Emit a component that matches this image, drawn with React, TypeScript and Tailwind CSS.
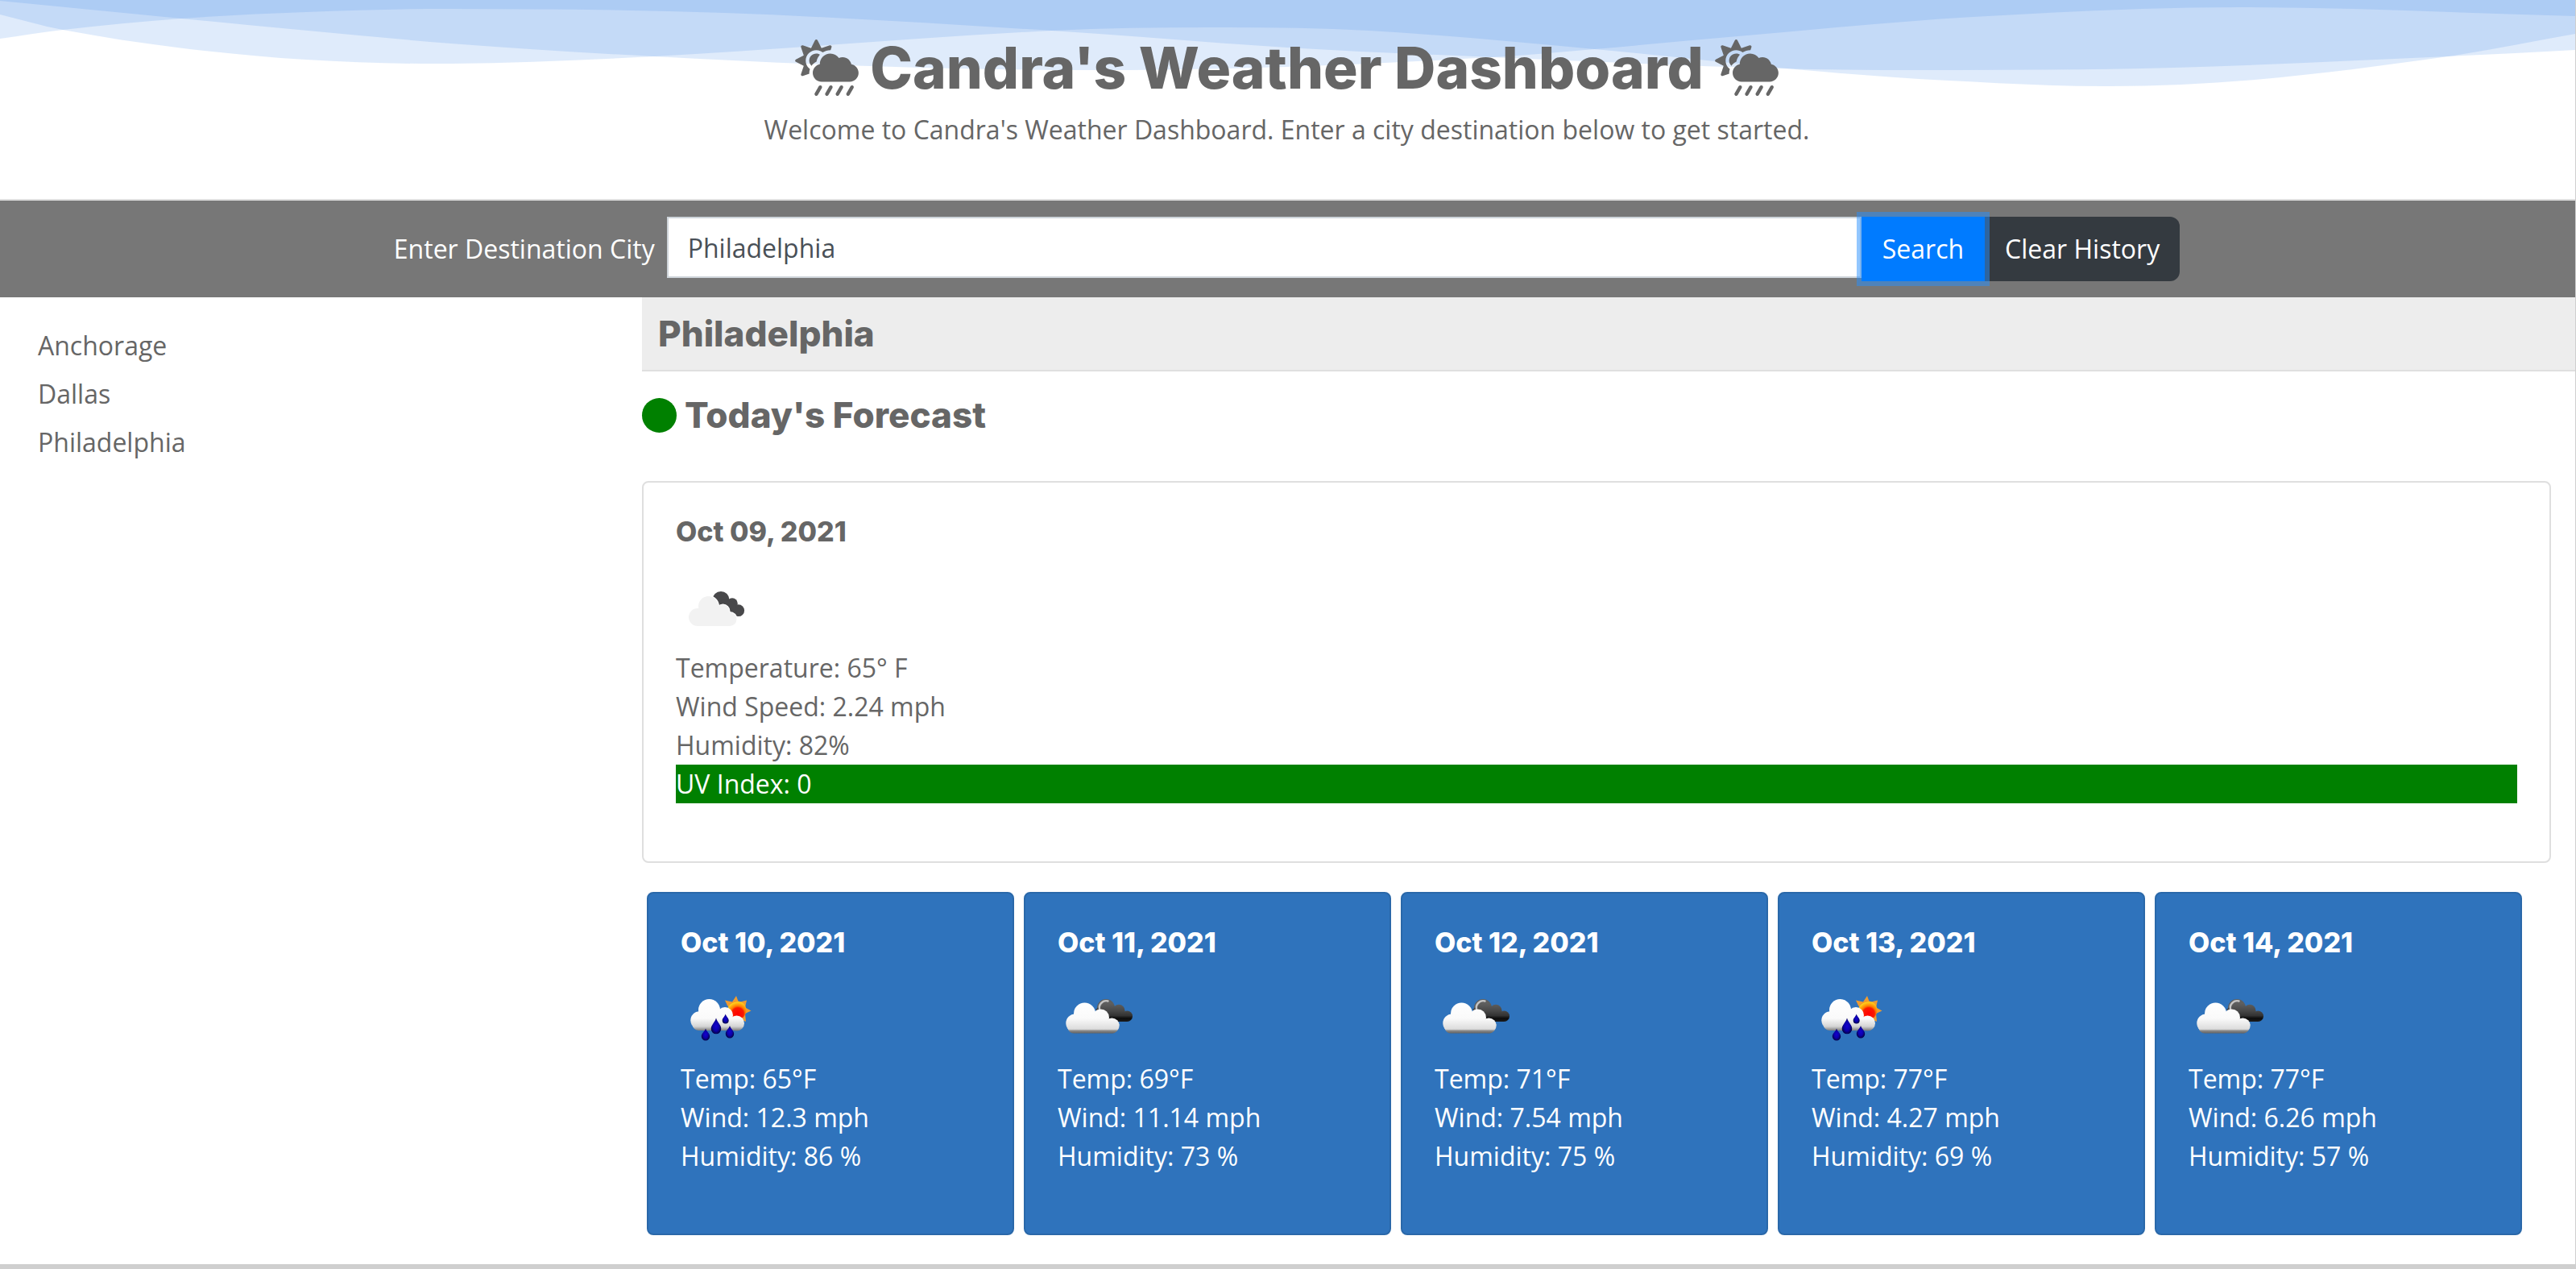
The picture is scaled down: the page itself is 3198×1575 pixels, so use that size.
import { useState } from "react";
import type { ReactNode } from "react";
import { FaCloudSunRain } from "react-icons/fa";

type Point = [number, number];

const WAVES: Point[][] = [
  [[0, 1], [225, 23], [560, 54], [812, 70], [1080, 82], [1350, 87], [1598, 83], [1853, 71], [1980, 61], [2158, 45], [2450, 21], [2780, 9], [3198, 20]],
  [[0, 48], [78, 37], [225, 23], [380, 15], [560, 11], [900, 16], [1306, 38], [1598, 59], [1853, 71], [2210, 85], [2430, 87], [2700, 84], [3040, 70], [3198, 62]],
  [[0, 18], [78, 37], [220, 59], [380, 74], [560, 79], [812, 70], [1306, 38], [1500, 34], [1700, 38], [1980, 61], [2240, 87], [2420, 100], [2620, 107], [2800, 99], [3040, 70], [3198, 42]],
];

/** Smooth path through the points, closed along the top edge. */
function wavePath(points: Point[]): string {
  let d = `M0 0L${points[0][0]} ${points[0][1]}`;
  for (let i = 0; i < points.length - 1; i++) {
    const p0 = points[Math.max(i - 1, 0)];
    const p1 = points[i];
    const p2 = points[i + 1];
    const p3 = points[Math.min(i + 2, points.length - 1)];
    const dx = (p2[0] - p1[0]) / 3;
    const m1 = (p2[1] - p0[1]) / (p2[0] - p0[0]);
    const m2 = (p3[1] - p1[1]) / (p3[0] - p1[0]);
    d += `C${p1[0] + dx} ${p1[1] + m1 * dx} ${p2[0] - dx} ${p2[1] - m2 * dx} ${p2[0]} ${p2[1]}`;
  }
  return d + "V0Z";
}

function Waves() {
  return (
    <svg className="absolute inset-x-0 top-0 h-[110px] w-full" viewBox="0 0 3198 110" preserveAspectRatio="none" aria-hidden="true">
      {WAVES.map((w, i) => (
        <path key={i} d={wavePath(w)} fill="#3785e4" fillOpacity={0.16} />
      ))}
    </svg>
  );
}

function FlatClouds() {
  return (
    <svg className="size-[100px]" viewBox="0 0 100 100" aria-hidden="true">
      <g fill="#48484a">
        <circle cx="56" cy="39.5" r="10.5" />
        <circle cx="70" cy="44" r="6.8" />
        <circle cx="77.7" cy="52.7" r="7.4" />
        <path d="M56 38l14 4 8 10-4 7-14-3z" />
      </g>
      <g fill="#fff" stroke="#fff" strokeWidth="2">
        <circle cx="40.5" cy="47.5" r="12.5" />
        <circle cx="58.5" cy="53.5" r="8" />
        <circle cx="67" cy="63.5" r="8.5" />
      </g>
      <g fill="#f2f2f2">
        <circle cx="27" cy="61" r="11" />
        <circle cx="40.5" cy="47.5" r="12.5" />
        <circle cx="58" cy="54" r="8.5" />
        <circle cx="67" cy="63.5" r="8.5" />
        <path d="M27 72V50h12l15 0 13 8v14z" />
      </g>
    </svg>
  );
}

function GlossyClouds({ id }: { id: string }) {
  return (
    <svg className="size-[100px]" viewBox="0 0 100 100" aria-hidden="true">
      <defs>
        <linearGradient id={`${id}-w`} gradientUnits="userSpaceOnUse" x1="0" y1="30" x2="0" y2="68">
          <stop offset="0" stopColor="#fff" />
          <stop offset="0.5" stopColor="#fafafa" />
          <stop offset="0.85" stopColor="#dcdcdc" />
          <stop offset="0.9" stopColor="#8a8a8a" />
          <stop offset="1" stopColor="#5c5c5c" />
        </linearGradient>
        <linearGradient id={`${id}-d`} gradientUnits="userSpaceOnUse" x1="0" y1="26" x2="0" y2="53">
          <stop offset="0" stopColor="#6a6a6a" />
          <stop offset="0.5" stopColor="#484848" />
          <stop offset="0.72" stopColor="#333" />
          <stop offset="0.85" stopColor="#0c0c0c" />
          <stop offset="1" stopColor="#1c1c1c" />
        </linearGradient>
      </defs>
      <circle cx="60" cy="36" r="11" fill="#5e5e5e" />
      <path d="M47 38l4-3 2 8z" fill="#444" />
      <path d="M52.5 39a8.5 8.5 0 0 1 10-11.5" fill="none" stroke="#c4c4c4" strokeWidth="2.4" strokeLinecap="round" />
      <g fill={`url(#${id}-d)`}>
        <circle cx="62.5" cy="38.5" r="9.5" />
        <circle cx="76" cy="39.2" r="7.5" />
        <circle cx="86.3" cy="46.3" r="6.7" />
        <path d="M58 40h18l10 4v9H62z" />
      </g>
      <g fill={`url(#${id}-w)`}>
        <circle cx="21.8" cy="55" r="11.5" />
        <circle cx="33.5" cy="43" r="13.5" />
        <circle cx="53.5" cy="48" r="10.5" />
        <circle cx="67.3" cy="57.8" r="9.4" />
        <path d="M17 50L33 42l20 4 14 8 7 8c0 4-4 5.600-7 5.600H20c-4 0-7-3-8-8z" />
      </g>
    </svg>
  );
}

function SunRain({ id }: { id: string }) {
  return (
    <svg className="size-[100px]" viewBox="0 0 100 100" aria-hidden="true">
      <defs>
        <linearGradient id={`${id}-c`} gradientUnits="userSpaceOnUse" x1="0" y1="25" x2="0" y2="65">
          <stop offset="0" stopColor="#fff" />
          <stop offset="0.6" stopColor="#fafafa" />
          <stop offset="0.85" stopColor="#d4d4d4" />
          <stop offset="1" stopColor="#6e6e6e" />
        </linearGradient>
        <radialGradient id={`${id}-s`} gradientUnits="userSpaceOnUse" cx="71" cy="43" r="15">
          <stop offset="0" stopColor="#f00" />
          <stop offset="0.48" stopColor="#fb1a00" />
          <stop offset="0.62" stopColor="#ff7a00" />
          <stop offset="0.95" stopColor="#ffd21c" />
          <stop offset="1" stopColor="#f59a20" />
        </radialGradient>
        <radialGradient id={`${id}-r`}>
          <stop offset="0" stopColor="#1400d2" />
          <stop offset="0.6" stopColor="#0b00a8" />
          <stop offset="1" stopColor="#04004e" />
        </radialGradient>
      </defs>
      <path
        d="M69 21l3 8 10-2.500-2 9 7.500 4-7.500 3.500 1 10-9-4-14-16-3-6.500 9 2z"
        fill="#f09c30"
      />
      <circle cx="70" cy="39" r="11.500" fill={`url(#${id}-s)`} />
      <g fill={`url(#${id}-c)`}>
        <circle cx="23.500" cy="51.500" r="11.200" />
        <circle cx="35.500" cy="38.500" r="13.500" />
        <circle cx="55" cy="45" r="10" />
        <circle cx="69.500" cy="55" r="9.500" />
        <path d="M23 40l12-2 20 6 14 9v11H24c-4 0-7-1-9-5z" />
      </g>
      <g fill={`url(#${id}-r)`}>
        <path d="M44 48.500C45.500 54 50.300 57 50.300 62a6.300 6.300 0 0 1-12.600 0C37.700 57 42.500 54 44 48.500z" />
        <path d="M55.700 43.500c1 3.500 4 5 4 8a4 4 0 0 1-8 0c0-3 3-4.500 4-8z" />
        <path d="M31 61.500c1.200 4 5.200 6 5.200 9.700a5.200 5.200 0 0 1-10.400 0c0-3.700 4-5.700 5.200-9.700z" />
        <path d="M61 58c1.200 4 5.200 6 5.200 10.300a5.200 5.200 0 0 1-10.400 0C55.800 64 59.800 62 61 58z" />
      </g>
    </svg>
  );
}

const FORECAST = [
  { date: "Oct 10, 2021", icon: "rain", temp: "65", wind: "12.3", humidity: "86" },
  { date: "Oct 11, 2021", icon: "clouds", temp: "69", wind: "11.14", humidity: "73" },
  { date: "Oct 12, 2021", icon: "clouds", temp: "71", wind: "7.54", humidity: "75" },
  { date: "Oct 13, 2021", icon: "rain", temp: "77", wind: "4.27", humidity: "69" },
  { date: "Oct 14, 2021", icon: "clouds", temp: "77", wind: "6.26", humidity: "57" },
];

function Card({ date, icon, className, children }: { date: string; icon: ReactNode; className: string; children: ReactNode }) {
  return (
    <article className={`rounded-lg border-2 px-10 pt-10 pb-[72px] ${className}`}>
      <h3 className="mb-6 font-[Inter,sans-serif] text-[34px] leading-[42px] font-extrabold">{date}</h3>
      {icon}
      {children}
    </article>
  );
}

export default function App() {
  const [city, setCity] = useState("Philadelphia");

  return (
    <div className="border-r border-b-[6px] border-[#cfcfcf] bg-white font-['Open_Sans',sans-serif] text-[32px] leading-[48px] text-[#666]">
      <header className="relative border-b-2 border-[#dfdfdf] pt-10 pr-0.5 pb-[62px] text-center">
        <Waves />
        <div className="relative">
          <h1 className="mb-[9px] flex items-center justify-center gap-3.5 font-[Inter,sans-serif] text-[71px] leading-[88px] font-extrabold">
            <FaCloudSunRain aria-hidden="true" className="h-[70px] w-[79px]" />
            Candra's Weather Dashboard
            <FaCloudSunRain aria-hidden="true" className="h-[70px] w-[79px]" />
          </h1>
          <p>Welcome to Candra's Weather Dashboard. Enter a city destination below to get started.</p>
        </div>
      </header>

      <div className="bg-[#777] py-5 pr-0.5 text-white">
        <form className="mx-auto flex w-[69.4%] items-start" onSubmit={(e) => e.preventDefault()}>
          <label htmlFor="city" className="mr-[15px] leading-[80px]">
            Enter Destination City
          </label>
          <input
            id="city"
            type="text"
            value={city}
            onChange={(e) => setCity(e.target.value)}
            className="h-[76px] min-w-0 flex-1 border-2 border-[#ced4da] bg-white px-6 text-[#495057] outline-none"
          />
          <button type="submit" className="relative z-10 h-20 bg-[#007bff] px-[26px] ring-[6px] ring-[#268fff]/50">
            Search
          </button>
          <button type="button" className="h-20 rounded-r-xl bg-[#343a40] px-[25px]">
            Clear History
          </button>
        </form>
      </div>

      <div className="flex">
        <nav aria-label="Search history" className="w-[24.93%] pt-[30px]">
          <ul className="pl-[47px]">
            {["Anchorage", "Dallas", "Philadelphia"].map((name) => (
              <li key={name} className="py-1.5">
                <a href={`#${name}`}>{name}</a>
              </li>
            ))}
          </ul>
        </nav>

        <main className="min-w-0 flex-1 pb-9">
          <h2 className="border-b-2 border-[#dfdfdf] bg-[#ededed] px-5 font-[Inter,sans-serif] text-[44px] leading-[90px] font-extrabold">
            Philadelphia
          </h2>
          <h2 className="mt-6 mb-[52px] flex items-center gap-2.5 font-[Inter,sans-serif] text-[44px] leading-[60px] font-extrabold">
            <span className="size-[43px] rounded-full bg-[#008000]" />
            Today's Forecast
          </h2>

          <Card date="Oct 09, 2021" icon={<FlatClouds />} className="mr-[30px] border-[#dfdfdf]">
            <p>Temperature: 65° F</p>
            <p>Wind Speed: 2.24 mph</p>
            <p>Humidity: 82%</p>
            <p className="bg-[#008000] text-white">UV Index: 0</p>
          </Card>

          <section aria-label="Five day forecast" className="mt-9 mr-[66px] ml-1.5 grid grid-cols-5 gap-3">
            {FORECAST.map((day, i) => (
              <Card
                key={day.date}
                date={day.date}
                icon={day.icon === "rain" ? <SunRain id={`day${i}`} /> : <GlossyClouds id={`day${i}`} />}
                className="border-[#2a68a9] bg-[#2f73bc] text-white"
              >
                <p>Temp: {day.temp}°F</p>
                <p>Wind: {day.wind} mph</p>
                <p>Humidity: {day.humidity} %</p>
              </Card>
            ))}
          </section>
        </main>
      </div>
    </div>
  );
}
